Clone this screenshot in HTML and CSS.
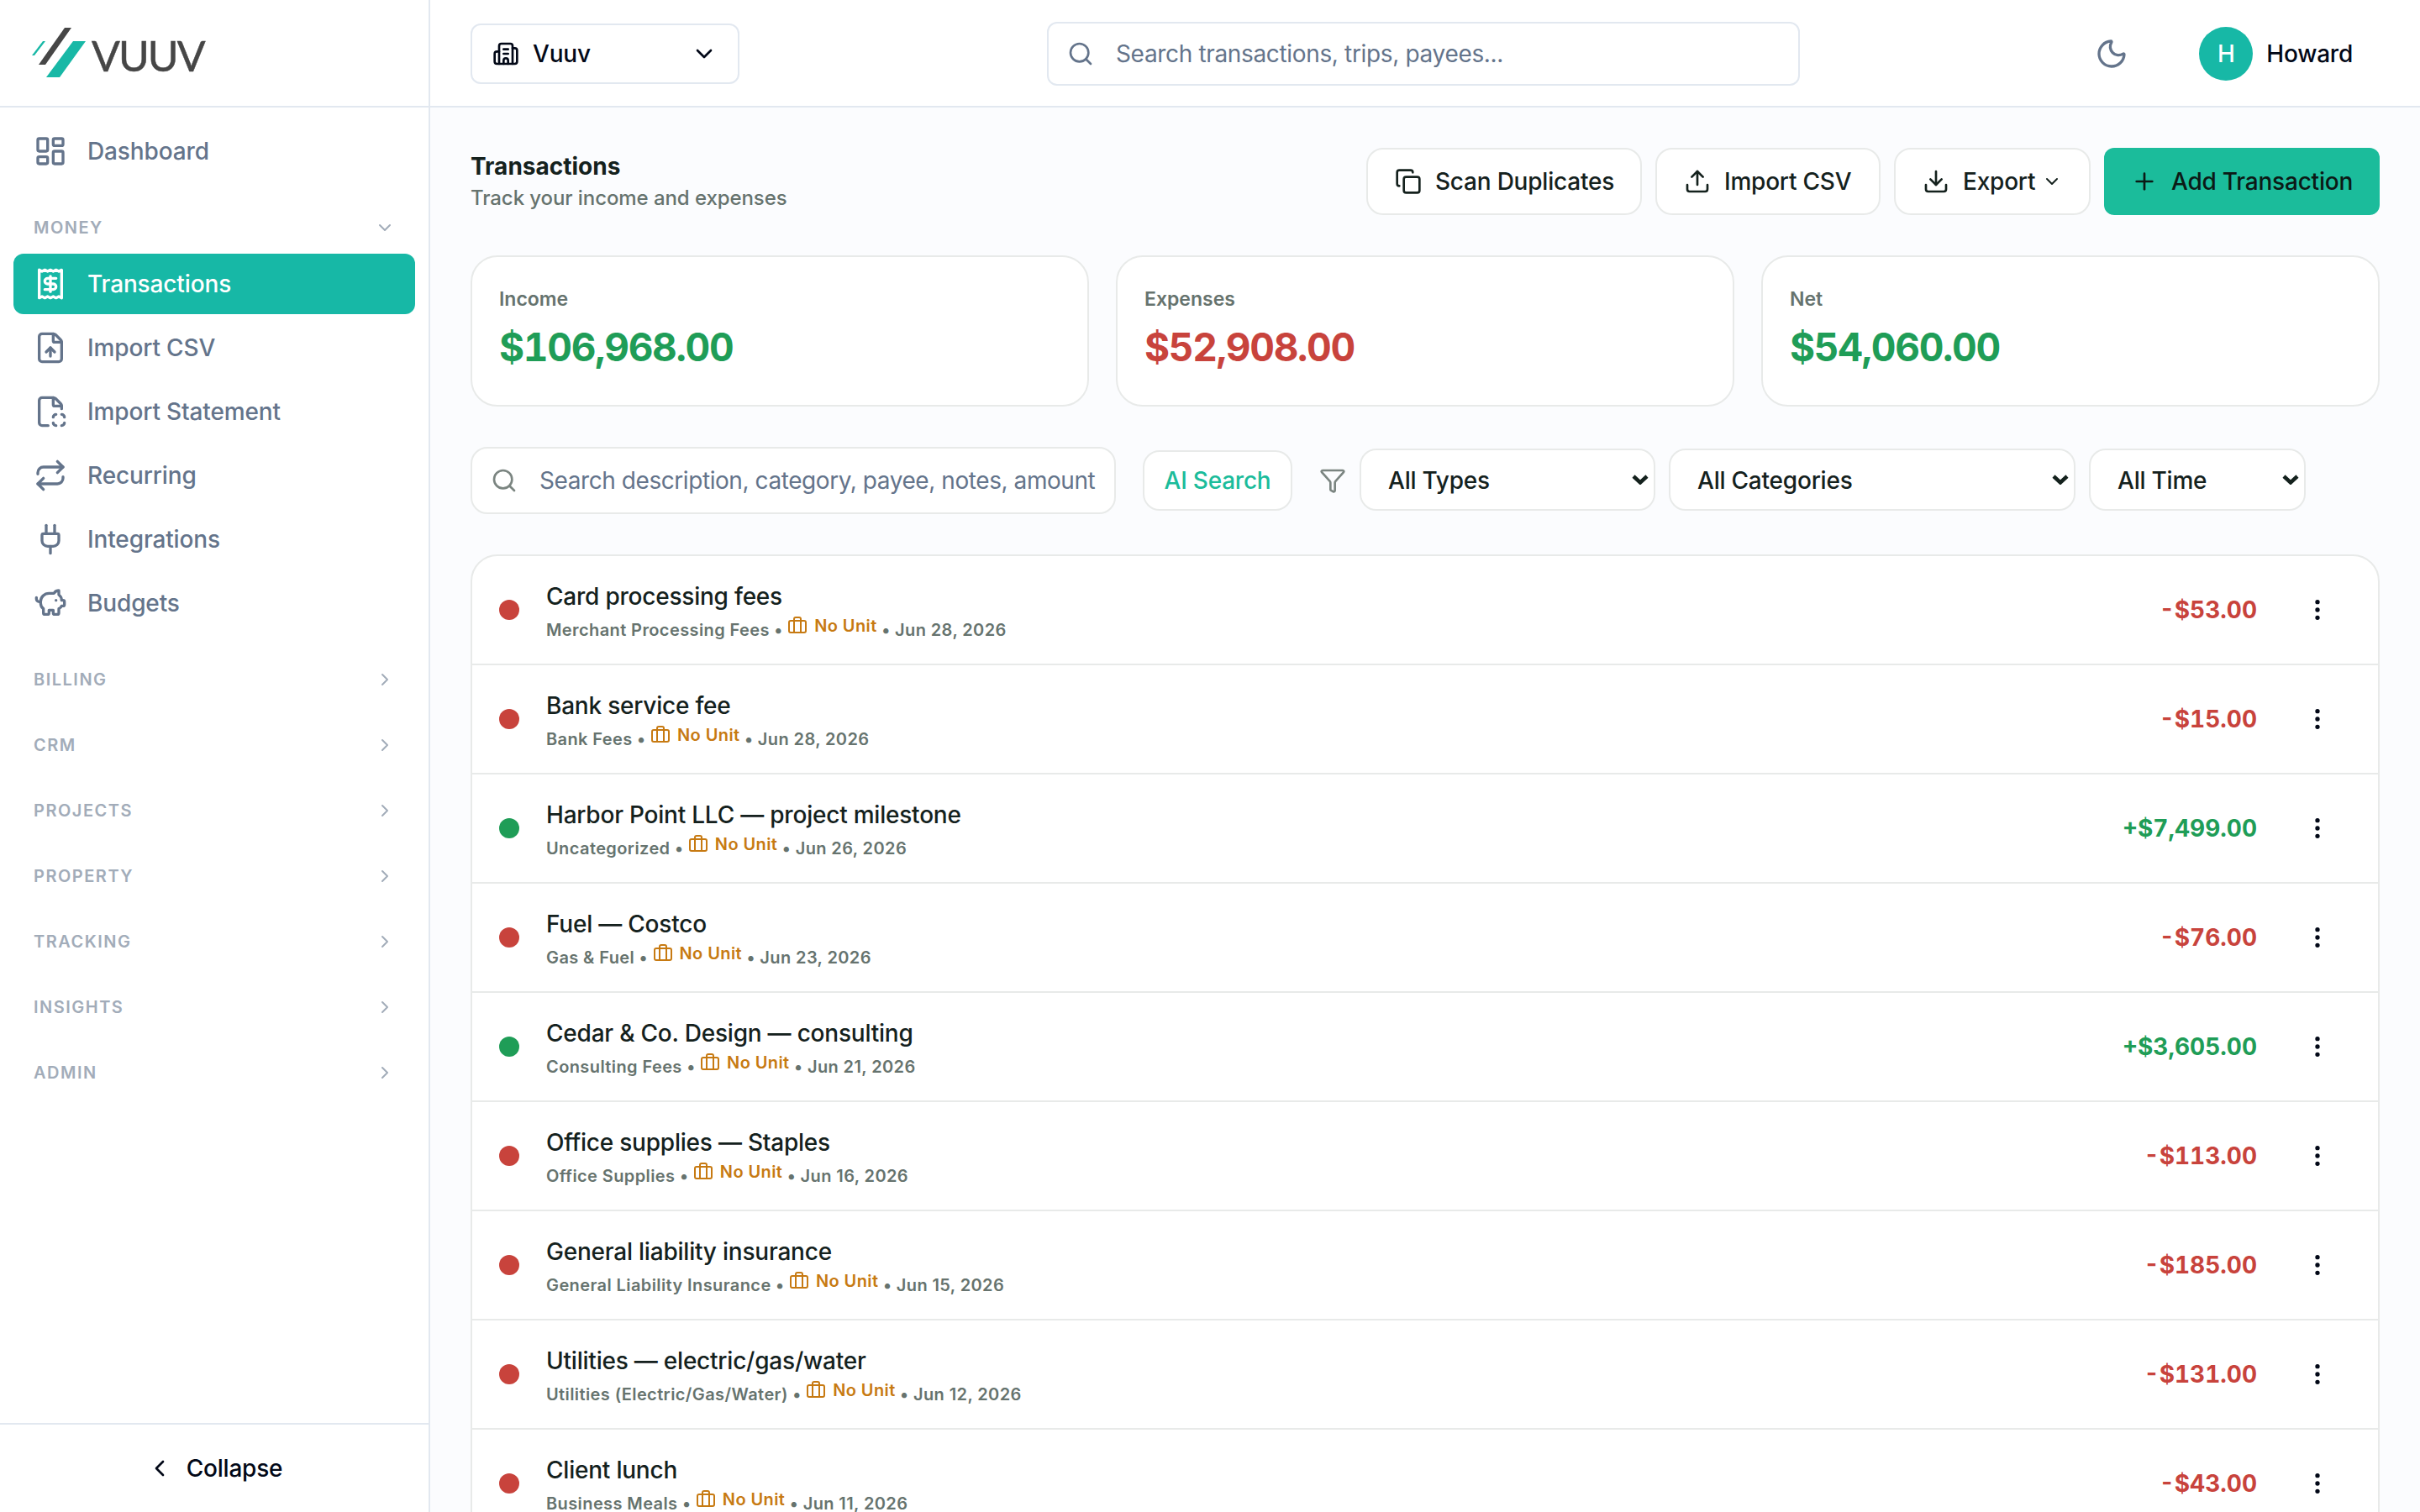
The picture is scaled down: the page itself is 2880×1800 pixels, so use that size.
FILE: index.html
```html
<!DOCTYPE html>
<html lang="en">
<head>
  <meta charset="utf-8">
  <title>Transactions - Vuuv</title>
  <link rel="stylesheet" href="styles.css">
</head>
<body>
  <svg class="sprite" aria-hidden="true">
    <symbol id="dashboard" viewBox="0 0 24 24"><rect x="3" y="3" width="7" height="9" rx="1"/><rect x="14" y="3" width="7" height="5" rx="1"/><rect x="14" y="12" width="7" height="9" rx="1"/><rect x="3" y="16" width="7" height="5" rx="1"/></symbol>
    <symbol id="receipt" viewBox="0 0 24 24"><path d="M4 2v20l2-1 2 1 2-1 2 1 2-1 2 1 2-1 2 1V2l-2 1-2-1-2 1-2-1-2 1-2-1-2 1Z"/><path d="M16 8h-6a2 2 0 1 0 0 4h4a2 2 0 1 1 0 4H8"/><path d="M12 17.5v-11"/></symbol>
    <symbol id="file-up" viewBox="0 0 24 24"><path d="M6 22a2 2 0 0 1-2-2V4a2 2 0 0 1 2-2h8a2.4 2.4 0 0 1 1.704.706l3.588 3.588A2.4 2.4 0 0 1 20 8v12a2 2 0 0 1-2 2z"/><path d="M14 2v5a1 1 0 0 0 1 1h5"/><path d="M12 12v6"/><path d="m15 15-3-3-3 3"/></symbol>
    <symbol id="file-scan" viewBox="0 0 24 24"><path d="M20 10V8a2.4 2.4 0 0 0-.706-1.704l-3.588-3.588A2.4 2.4 0 0 0 14 2H6a2 2 0 0 0-2 2v16a2 2 0 0 0 2 2h4.35"/><path d="M14 2v5a1 1 0 0 0 1 1h5"/><path d="M16 14a2 2 0 0 0-2 2"/><path d="M16 22a2 2 0 0 1-2-2"/><path d="M20 14a2 2 0 0 1 2 2"/><path d="M20 22a2 2 0 0 0 2-2"/></symbol>
    <symbol id="repeat" viewBox="0 0 24 24"><path d="m17 2 4 4-4 4"/><path d="M3 11v-1a4 4 0 0 1 4-4h14"/><path d="m7 22-4-4 4-4"/><path d="M21 13v1a4 4 0 0 1-4 4H3"/></symbol>
    <symbol id="plug" viewBox="0 0 24 24"><path d="M12 22v-5"/><path d="M15 8V2"/><path d="M17 8a1 1 0 0 1 1 1v4a4 4 0 0 1-4 4h-4a4 4 0 0 1-4-4V9a1 1 0 0 1 1-1z"/><path d="M9 8V2"/></symbol>
    <symbol id="piggy" viewBox="0 0 24 24"><path d="M11 17h3v2a1 1 0 0 0 1 1h2a1 1 0 0 0 1-1v-3a3.16 3.16 0 0 0 2-2h1a1 1 0 0 0 1-1v-2a1 1 0 0 0-1-1h-1a5 5 0 0 0-2-4V3a4 4 0 0 0-3.2 1.6l-.3.4H11a6 6 0 0 0-6 6v1a5 5 0 0 0 2 4v3a1 1 0 0 0 1 1h2a1 1 0 0 0 1-1z"/><path d="M16 10h.01"/><path d="M2 8v1a2 2 0 0 0 2 2h1"/></symbol>
    <symbol id="chevron-down" viewBox="0 0 24 24"><path d="m6 9 6 6 6-6"/></symbol>
    <symbol id="chevron-right" viewBox="0 0 24 24"><path d="m9 18 6-6-6-6"/></symbol>
    <symbol id="chevron-left" viewBox="0 0 24 24"><path d="m15 18-6-6 6-6"/></symbol>
    <symbol id="building" viewBox="0 0 24 24"><path d="M10 12h4"/><path d="M10 8h4"/><path d="M14 21v-3a2 2 0 0 0-4 0v3"/><path d="M6 10H4a2 2 0 0 0-2 2v7a2 2 0 0 0 2 2h16a2 2 0 0 0 2-2V9a2 2 0 0 0-2-2h-2"/><path d="M6 21V5a2 2 0 0 1 2-2h8a2 2 0 0 1 2 2v16"/></symbol>
    <symbol id="search" viewBox="0 0 24 24"><path d="m21 21-4.34-4.34"/><circle cx="11" cy="11" r="8"/></symbol>
    <symbol id="moon" viewBox="0 0 24 24"><path d="M20.985 12.486a9 9 0 1 1-9.473-9.472c.405-.022.617.46.402.803a6 6 0 0 0 8.268 8.268c.344-.215.825-.004.803.401"/></symbol>
    <symbol id="copy" viewBox="0 0 24 24"><rect width="14" height="14" x="8" y="8" rx="2" ry="2"/><path d="M4 16c-1.1 0-2-.9-2-2V4c0-1.1.9-2 2-2h10c1.1 0 2 .9 2 2"/></symbol>
    <symbol id="upload" viewBox="0 0 24 24"><path d="M12 3v12"/><path d="m17 8-5-5-5 5"/><path d="M21 15v4a2 2 0 0 1-2 2H5a2 2 0 0 1-2-2v-4"/></symbol>
    <symbol id="download" viewBox="0 0 24 24"><path d="M12 15V3"/><path d="M21 15v4a2 2 0 0 1-2 2H5a2 2 0 0 1-2-2v-4"/><path d="m7 10 5 5 5-5"/></symbol>
    <symbol id="plus" viewBox="0 0 24 24"><path d="M5 12h14"/><path d="M12 5v14"/></symbol>
    <symbol id="funnel" viewBox="0 0 24 24"><path d="M10 20a1 1 0 0 0 .553.895l2 1A1 1 0 0 0 14 21v-7a2 2 0 0 1 .517-1.341L21.74 4.67A1 1 0 0 0 21 3H3a1 1 0 0 0-.742 1.67l7.225 7.989A2 2 0 0 1 10 14z"/></symbol>
    <symbol id="briefcase" viewBox="0 0 24 24"><path d="M16 20V4a2 2 0 0 0-2-2h-4a2 2 0 0 0-2 2v16"/><rect width="20" height="14" x="2" y="6" rx="2"/></symbol>
    <symbol id="more" viewBox="0 0 24 24"><circle cx="12" cy="12" r="1"/><circle cx="12" cy="5" r="1"/><circle cx="12" cy="19" r="1"/></symbol>
    <symbol id="arrow" viewBox="0 0 20 12"><path d="M2 2l8 7.5L18 2"/></symbol>
  </svg>

  <div class="app">
    <aside class="sidebar">
      <div class="logo">
        <svg class="logo-mark" viewBox="0 0 66 60">
          <path class="teal" d="M13 16h3L3 33H0z"/>
          <path class="dark" d="M39 0h8L16 44H8z"/>
          <path class="teal" d="M49 16h15L33 59H17z"/>
        </svg>
        <span class="logo-text">VUUV</span>
      </div>

      <nav class="nav">
        <a class="nav-item"><svg class="icon-lg"><use href="#dashboard"/></svg>Dashboard</a>

        <div class="nav-section">MONEY<svg class="icon-sm"><use href="#chevron-down"/></svg></div>
        <div class="nav-group">
          <a class="nav-item active"><svg class="icon-lg"><use href="#receipt"/></svg>Transactions</a>
          <a class="nav-item"><svg class="icon-lg"><use href="#file-up"/></svg>Import CSV</a>
          <a class="nav-item"><svg class="icon-lg"><use href="#file-scan"/></svg>Import Statement</a>
          <a class="nav-item"><svg class="icon-lg"><use href="#repeat"/></svg>Recurring</a>
          <a class="nav-item"><svg class="icon-lg"><use href="#plug"/></svg>Integrations</a>
          <a class="nav-item"><svg class="icon-lg"><use href="#piggy"/></svg>Budgets</a>
        </div>

        <div class="nav-section">BILLING<svg class="icon-sm"><use href="#chevron-right"/></svg></div>
        <div class="nav-section">CRM<svg class="icon-sm"><use href="#chevron-right"/></svg></div>
        <div class="nav-section">PROJECTS<svg class="icon-sm"><use href="#chevron-right"/></svg></div>
        <div class="nav-section">PROPERTY<svg class="icon-sm"><use href="#chevron-right"/></svg></div>
        <div class="nav-section">TRACKING<svg class="icon-sm"><use href="#chevron-right"/></svg></div>
        <div class="nav-section">INSIGHTS<svg class="icon-sm"><use href="#chevron-right"/></svg></div>
        <div class="nav-section">ADMIN<svg class="icon-sm"><use href="#chevron-right"/></svg></div>
      </nav>

      <button class="collapse"><svg class="icon"><use href="#chevron-left"/></svg>Collapse</button>
    </aside>

    <div class="page">
      <header class="topbar">
        <button class="company"><svg class="icon"><use href="#building"/></svg><span class="company-name">Vuuv</span><svg class="icon"><use href="#chevron-down"/></svg></button>
        <div class="top-search"><svg class="icon"><use href="#search"/></svg><span>Search transactions, trips, payees...</span></div>
        <div class="user">
          <svg class="icon-lg moon"><use href="#moon"/></svg>
          <span class="avatar">H</span>
          <span class="user-name">Howard</span>
        </div>
      </header>

      <main class="content">
        <div class="page-head">
          <div>
            <h1>Transactions</h1>
            <p>Track your income and expenses</p>
          </div>
          <div class="actions">
            <button class="btn btn-scan"><svg class="icon"><use href="#copy"/></svg>Scan Duplicates</button>
            <button class="btn btn-import"><svg class="icon"><use href="#upload"/></svg>Import CSV</button>
            <button class="btn btn-export"><svg class="icon"><use href="#download"/></svg>Export<svg class="icon-sm"><use href="#chevron-down"/></svg></button>
            <button class="btn btn-primary"><svg class="icon"><use href="#plus"/></svg>Add Transaction</button>
          </div>
        </div>

        <div class="cards">
          <div class="card"><div class="card-label">Income</div><div class="card-value income">$106,968.00</div></div>
          <div class="card"><div class="card-label">Expenses</div><div class="card-value expense">$52,908.00</div></div>
          <div class="card"><div class="card-label">Net</div><div class="card-value income">$54,060.00</div></div>
        </div>

        <div class="filters">
          <div class="search-box"><svg class="icon"><use href="#search"/></svg><span>Search description, category, payee, notes, amount</span></div>
          <button class="ai-search">AI Search</button>
          <div class="filter-selects">
            <svg class="icon funnel"><use href="#funnel"/></svg>
            <div class="select types">All Types<svg class="arrow"><use href="#arrow"/></svg></div>
            <div class="select categories">All Categories<svg class="arrow"><use href="#arrow"/></svg></div>
            <div class="select time">All Time<svg class="arrow"><use href="#arrow"/></svg></div>
          </div>
        </div>

        <div class="list">
          <div class="row">
            <span class="dot expense"></span>
            <div class="info">
              <div class="name">Card processing fees</div>
              <div class="meta">Merchant Processing Fees • <span class="unit"><svg class="icon-sm"><use href="#briefcase"/></svg>No Unit</span> • Jun 28, 2026</div>
            </div>
            <div class="amount expense">-$53.00</div>
            <svg class="icon more"><use href="#more"/></svg>
          </div>
          <div class="row">
            <span class="dot expense"></span>
            <div class="info">
              <div class="name">Bank service fee</div>
              <div class="meta">Bank Fees • <span class="unit"><svg class="icon-sm"><use href="#briefcase"/></svg>No Unit</span> • Jun 28, 2026</div>
            </div>
            <div class="amount expense">-$15.00</div>
            <svg class="icon more"><use href="#more"/></svg>
          </div>
          <div class="row">
            <span class="dot income"></span>
            <div class="info">
              <div class="name">Harbor Point LLC — project milestone</div>
              <div class="meta">Uncategorized • <span class="unit"><svg class="icon-sm"><use href="#briefcase"/></svg>No Unit</span> • Jun 26, 2026</div>
            </div>
            <div class="amount income">+$7,499.00</div>
            <svg class="icon more"><use href="#more"/></svg>
          </div>
          <div class="row">
            <span class="dot expense"></span>
            <div class="info">
              <div class="name">Fuel — Costco</div>
              <div class="meta">Gas &amp; Fuel • <span class="unit"><svg class="icon-sm"><use href="#briefcase"/></svg>No Unit</span> • Jun 23, 2026</div>
            </div>
            <div class="amount expense">-$76.00</div>
            <svg class="icon more"><use href="#more"/></svg>
          </div>
          <div class="row">
            <span class="dot income"></span>
            <div class="info">
              <div class="name">Cedar &amp; Co. Design — consulting</div>
              <div class="meta">Consulting Fees • <span class="unit"><svg class="icon-sm"><use href="#briefcase"/></svg>No Unit</span> • Jun 21, 2026</div>
            </div>
            <div class="amount income">+$3,605.00</div>
            <svg class="icon more"><use href="#more"/></svg>
          </div>
          <div class="row">
            <span class="dot expense"></span>
            <div class="info">
              <div class="name">Office supplies — Staples</div>
              <div class="meta">Office Supplies • <span class="unit"><svg class="icon-sm"><use href="#briefcase"/></svg>No Unit</span> • Jun 16, 2026</div>
            </div>
            <div class="amount expense">-$113.00</div>
            <svg class="icon more"><use href="#more"/></svg>
          </div>
          <div class="row">
            <span class="dot expense"></span>
            <div class="info">
              <div class="name">General liability insurance</div>
              <div class="meta">General Liability Insurance • <span class="unit"><svg class="icon-sm"><use href="#briefcase"/></svg>No Unit</span> • Jun 15, 2026</div>
            </div>
            <div class="amount expense">-$185.00</div>
            <svg class="icon more"><use href="#more"/></svg>
          </div>
          <div class="row">
            <span class="dot expense"></span>
            <div class="info">
              <div class="name">Utilities — electric/gas/water</div>
              <div class="meta">Utilities (Electric/Gas/Water) • <span class="unit"><svg class="icon-sm"><use href="#briefcase"/></svg>No Unit</span> • Jun 12, 2026</div>
            </div>
            <div class="amount expense">-$131.00</div>
            <svg class="icon more"><use href="#more"/></svg>
          </div>
          <div class="row">
            <span class="dot expense"></span>
            <div class="info">
              <div class="name">Client lunch</div>
              <div class="meta">Business Meals • <span class="unit"><svg class="icon-sm"><use href="#briefcase"/></svg>No Unit</span> • Jun 11, 2026</div>
            </div>
            <div class="amount expense">-$43.00</div>
            <svg class="icon more"><use href="#more"/></svg>
          </div>
        </div>
      </main>
    </div>
  </div>
</body>
</html>
```
FILE: styles.css
```css
* {
  box-sizing: border-box;
}
body {
  margin: 0;
  font-family: Inter, "Liberation Sans", sans-serif;
  font-size: 28px;
  font-weight: 500;
  line-height: 40px;
  letter-spacing: -0.22px;
  color: #14211d;
  background-color: #fbfcfe;
}
button {
  font: inherit;
  letter-spacing: inherit;
  margin: 0;
}
svg {
  fill: none;
  stroke: currentColor;
  stroke-width: 2;
  stroke-linecap: round;
  stroke-linejoin: round;
  flex: none;
}
.sprite {
  display: none;
}
.icon-sm {
  width: 24px;
  height: 24px;
}
.icon {
  width: 32px;
  height: 32px;
}
.icon-lg {
  width: 40px;
  height: 40px;
}
.app {
  display: flex;
  height: 1800px;
  overflow: hidden;
}

/* sidebar */
.sidebar {
  display: flex;
  flex-direction: column;
  width: 512px;
  flex: none;
  background-color: #ffffff;
  border-right: 2px solid #e2e8f0;
}
.logo {
  display: flex;
  height: 128px;
  padding: 33px 0 0 38px;
  border-bottom: 2px solid #e2e8f0;
}
.logo-mark {
  width: 66px;
  height: 60px;
  stroke: none;
}
.logo-mark .teal {
  fill: #18b8a6;
}
.logo-mark .dark {
  fill: #464646;
}
.logo-text {
  margin-left: 5px;
  padding-top: 3px;
  font-family: Lato, sans-serif;
  font-size: 50px;
  font-weight: 400;
  line-height: 60px;
  letter-spacing: -1.9px;
  color: #464646;
  -webkit-text-stroke: 0.5px #464646;
}
.nav {
  flex: 1;
  padding: 16px;
}
.nav-item {
  display: flex;
  align-items: center;
  gap: 24px;
  height: 72px;
  padding: 0 24px;
  border-radius: 12px;
  letter-spacing: -0.13px;
  color: #64748b;
}
.nav-item.active {
  background-color: #17b8a6;
  color: #ffffff;
}
.nav-section {
  display: flex;
  align-items: center;
  justify-content: space-between;
  height: 48px;
  margin-top: 30px;
  padding: 2px 24px 0;
  font-size: 20px;
  font-weight: 600;
  letter-spacing: 1.5px;
  color: #a2acb9;
}
.nav-group {
  display: flex;
  flex-direction: column;
  gap: 4px;
  margin-top: 8px;
}
.collapse {
  display: flex;
  align-items: center;
  justify-content: center;
  gap: 16px;
  height: 106px;
  border: none;
  border-top: 2px solid #e2e8f0;
  background: none;
  color: #020817;
}

/* top bar */
.page {
  flex: 1;
  min-width: 0;
}
.topbar {
  display: flex;
  align-items: center;
  height: 128px;
  padding: 2px 80px 0 48px;
  background-color: #ffffff;
  border-bottom: 2px solid #e2e8f0;
  color: #020817;
}
.company {
  display: flex;
  align-items: center;
  gap: 16px;
  width: 320px;
  height: 72px;
  padding: 0 24px;
  border: 2px solid #e2e8f0;
  border-radius: 12px;
  background-color: #ffffff;
  color: #020817;
}
.company-name {
  flex: 1;
  text-align: left;
}
.top-search {
  display: flex;
  align-items: center;
  gap: 26px;
  width: 896px;
  height: 76px;
  margin-left: 366px;
  padding: 0 22px;
  border: 2px solid #e2e8f0;
  border-radius: 12px;
  font-weight: 400;
  letter-spacing: -0.34px;
  color: #64748b;
}
.user {
  display: flex;
  align-items: center;
  margin-left: auto;
}
.moon {
  margin-right: 84px;
  color: #64748b;
}
.avatar {
  width: 64px;
  height: 64px;
  margin-right: 16px;
  border-radius: 50%;
  background-color: #17b8a6;
  color: #ffffff;
  line-height: 64px;
  text-align: center;
}

/* page content */
.content {
  padding: 48px;
}
.page-head {
  display: flex;
  align-items: center;
  justify-content: space-between;
  height: 80px;
}
h1 {
  margin: 0;
  font-size: 28px;
  font-weight: 700;
  line-height: 40px;
  letter-spacing: 0;
}
p {
  margin: 0;
  font-size: 24px;
  font-weight: 500;
  line-height: 36px;
  letter-spacing: -0.08px;
  color: #66736e;
}
.actions {
  display: flex;
  gap: 16px;
}
.btn {
  display: flex;
  align-items: center;
  gap: 16px;
  height: 80px;
  padding: 0 32px;
  border: 2px solid #e8eae9;
  border-radius: 20px;
  background-color: #ffffff;
  color: #14211d;
  white-space: nowrap;
}
.btn-scan {
  width: 328px;
}
.btn-import {
  width: 268px;
}
.btn-export {
  gap: 8px;
  width: 234px;
}
.btn-export .icon {
  margin-right: 8px;
}
.btn-primary {
  width: 328px;
  border: none;
  border-radius: 12px;
  background-color: #1bbc9b;
  color: #0b1a16;
}
.cards {
  display: grid;
  grid-template-columns: repeat(3, 1fr);
  gap: 32px;
  margin-top: 48px;
}
.card {
  height: 180px;
  padding: 32px;
  border: 2px solid #e8eae9;
  border-radius: 32px;
  background-color: #ffffff;
}
.card-label {
  font-size: 23px;
  font-weight: 600;
  line-height: 36px;
  letter-spacing: 0;
  color: #66736e;
}
.card-value {
  margin-top: 11px;
  font-size: 46px;
  font-weight: 700;
  line-height: 56px;
  letter-spacing: -1.3px;
  font-variant-numeric: tabular-nums;
}
.income {
  color: #1f9d57;
}
.expense {
  color: #c8433c;
}
.filters {
  display: flex;
  align-items: center;
  gap: 32px;
  height: 80px;
  margin-top: 48px;
}
.search-box {
  display: flex;
  align-items: center;
  gap: 26px;
  width: 768px;
  height: 80px;
  padding: 0 22px;
  border: 2px solid #e8eae9;
  border-radius: 20px;
  background-color: #ffffff;
  font-weight: 400;
  letter-spacing: -0.43px;
  white-space: nowrap;
  color: #64748b;
}
.search-box .icon,
.funnel {
  color: #7b8581;
}
.ai-search {
  width: 178px;
  height: 72px;
  padding: 0;
  border: 2px solid #e8eae9;
  border-radius: 20px;
  background-color: #ffffff;
  color: #1bbc9b;
}
.filter-selects {
  display: flex;
  align-items: center;
  gap: 16px;
}
.select {
  display: flex;
  align-items: center;
  justify-content: space-between;
  height: 74px;
  margin-bottom: 2px;
  padding: 2px 6px 0 32px;
  border: 2px solid #e8eae9;
  border-radius: 20px;
  background-color: #ffffff;
}
.types {
  width: 352px;
}
.categories {
  width: 484px;
}
.time {
  width: 258px;
}
.arrow {
  width: 20px;
  height: 12px;
  margin-bottom: 2px;
  stroke-width: 4.5;
  stroke-linecap: butt;
  stroke-linejoin: miter;
}

/* transactions */
.list {
  margin-top: 48px;
  border: 2px solid #e8eae9;
  border-radius: 32px;
  background-color: #ffffff;
}
.row {
  display: flex;
  align-items: center;
  height: 130px;
  padding: 0 56px 0 32px;
  border-bottom: 2px solid #e8eae9;
}
.dot {
  width: 24px;
  height: 24px;
  margin-right: 32px;
  border-radius: 50%;
  background-color: currentColor;
}
.info {
  flex: 1;
}
.name {
  line-height: 40px;
}
.meta {
  height: 32px;
  padding-top: 1px;
  font-size: 20px;
  font-weight: 600;
  line-height: 32px;
  letter-spacing: 0.4px;
  color: #66736e;
}
.unit {
  display: inline-flex;
  align-items: center;
  gap: 8px;
  vertical-align: 0;
  line-height: 28px;
  color: #c77a12;
}
.amount {
  font-weight: 700;
  letter-spacing: 0;
  font-variant-numeric: tabular-nums;
}
.more {
  margin-left: 56px;
  color: #020817;
}
```
